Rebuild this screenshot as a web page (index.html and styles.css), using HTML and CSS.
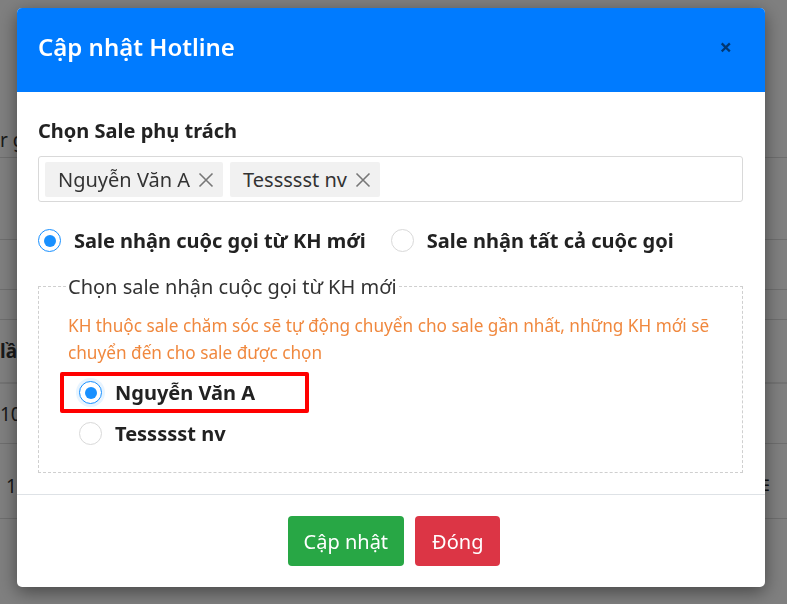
FILE: index.html
```html
<!DOCTYPE html>
<html lang="vi">
<head>
<meta charset="utf-8">
<title>Cập nhật Hotline</title>
<link rel="stylesheet" href="styles.css">
</head>
<body>
<div class="page">
  <div class="bg-row r1"><span class="bg-text">r g</span></div>
  <div class="bg-row r2"></div>
  <div class="bg-row r3"></div>
  <div class="bg-row r4"></div>
  <div class="bg-row r5 thick"><span class="bg-text bold">lần</span></div>
  <div class="bg-row r6"><span class="bg-text">10</span></div>
  <div class="bg-row r7"><span class="bg-text ind">1</span><span class="bg-menu">&#9776;</span></div>
</div>

<div class="overlay"></div>

<div class="modal">
  <div class="modal-header">
    <h2 class="modal-title">Cập nhật Hotline</h2>
    <span class="close">&times;</span>
  </div>
  <div class="modal-body">
    <div class="field-label">Chọn Sale phụ trách</div>
    <div class="select-box">
      <span class="tag">Nguyễn Văn A <svg class="tag-x" width="16" height="16" viewBox="0 0 16 16"><path d="M1.5 1.5L14.5 14.5M14.5 1.5L1.5 14.5" stroke="#777" stroke-width="1.6" fill="none"/></svg></span>
      <span class="tag">Tessssst nv <svg class="tag-x" width="16" height="16" viewBox="0 0 16 16"><path d="M1.5 1.5L14.5 14.5M14.5 1.5L1.5 14.5" stroke="#777" stroke-width="1.6" fill="none"/></svg></span>
    </div>
    <div class="radio-group">
      <label class="radio"><span class="dot on"></span><span class="radio-text">Sale nhận cuộc gọi từ KH mới</span></label>
      <label class="radio"><span class="dot"></span><span class="radio-text">Sale nhận tất cả cuộc gọi</span></label>
    </div>
    <fieldset class="sale-set">
      <legend>Chọn sale nhận cuộc gọi từ KH mới</legend>
      <p class="note">KH thuộc sale chăm sóc sẽ tự động chuyển cho sale gần nhất, những KH mới sẽ chuyển đến cho sale được chọn</p>
      <div class="option-list">
        <div class="option"><span class="dot on glow"></span><span class="radio-text">Nguyễn Văn A</span><span class="mark"></span></div>
        <div class="option"><span class="dot"></span><span class="radio-text">Tessssst nv</span></div>
      </div>
    </fieldset>
  </div>
  <div class="modal-footer">
    <button class="btn btn-green">Cập nhật</button>
    <button class="btn btn-red">Đóng</button>
  </div>
</div>
</body>
</html>
```

FILE: styles.css
```css
* { box-sizing: border-box; }
html, body { margin: 0; padding: 0; }
body {
  width: 787px;
  height: 604px;
  overflow: hidden;
  background: #ffffff;
  font-family: "Noto Sans", "Open Sans", "DejaVu Sans", sans-serif;
  color: #222;
}
.page {
  display: flex;
  flex-direction: column;
}
.bg-row {
  border-bottom: 1px solid #dcdcdc;
  display: flex;
  align-items: center;
  justify-content: space-between;
  color: #333;
  font-size: 19px;
}
.bg-row.thick { border-bottom: 2px solid #e6e6e6; }
.r1 { height: 158px; align-items: flex-start; padding-top: 128px; }
.r2 { height: 82px; }
.r3 { height: 50px; }
.r4 { height: 30px; }
.r5 { height: 64px; }
.r6 { height: 60px; }
.r7 { height: 75px; align-items: flex-start; padding-top: 30px; }
.bg-text { margin-left: 0; line-height: 24px; }
.bg-text.bold { font-weight: 700; }
.bg-text.ind { margin-left: 6px; }
.bg-menu { margin-right: 17px; font-size: 16px; color: #222; }

.overlay {
  position: fixed;
  inset: 0;
  background: rgba(0, 0, 0, 0.5);
}

.modal {
  position: fixed;
  left: 17px;
  top: 8px;
  width: 748px;
  background: #fff;
  border-radius: 5px;
  overflow: hidden;
  box-shadow: 0 5px 18px rgba(0, 0, 0, 0.45);
}
.modal-header {
  background: #007bff;
  height: 84px;
  padding: 22px 21px 0 21px;
  display: flex;
  align-items: flex-start;
  justify-content: space-between;
}
.modal-title {
  margin: 0;
  color: #fff;
  font-size: 24px;
  font-weight: 600;
  line-height: 34px;
}
.close {
  color: rgba(0, 0, 0, 0.55);
  font-size: 22px;
  font-weight: 700;
  line-height: 32px;
  margin-right: 12px;
}

.modal-body {
  padding: 25px 22px 21px 21px;
}
.field-label {
  font-size: 20px;
  font-weight: 700;
  line-height: 27px;
  color: #222;
}
.select-box {
  margin-top: 12px;
  height: 46px;
  border: 1px solid #d9d9d9;
  border-radius: 3px;
  padding: 5px 6px;
  display: flex;
  gap: 7px;
}
.tag {
  height: 35px;
  background: #f1f1f1;
  border-radius: 2px;
  padding: 0 9px 0 13px;
  display: flex;
  align-items: center;
  gap: 8px;
  font-size: 20px;
  color: #333;
}
.tag-x { display: block; }

.radio-group {
  margin-top: 25px;
  display: flex;
  gap: 25px;
}
.radio {
  display: flex;
  align-items: center;
  gap: 13px;
}
.radio-text {
  font-size: 20px;
  font-weight: 700;
  line-height: 27px;
  color: #222;
}
.dot {
  width: 23px;
  height: 23px;
  border-radius: 50%;
  border: 1px solid #d9d9d9;
  background: #fff;
  display: flex;
  align-items: center;
  justify-content: center;
  flex: none;
}
.dot.on { border-color: #1890ff; }
.dot.on::after {
  content: "";
  width: 12px;
  height: 12px;
  border-radius: 50%;
  background: #1890ff;
}
.dot.glow { box-shadow: 0 0 0 3px rgba(24, 144, 255, 0.1); }

.sale-set {
  margin: 19px 0 0 0;
  border: 1px dashed #cfcfcf;
  padding: 0 18px 18px 27px;
}
.sale-set legend {
  padding: 0 2px;
  font-size: 20px;
  line-height: 27px;
  color: #333;
}
.note {
  margin: 12px 0 0 0;
  padding-left: 2px;
  font-size: 17.2px;
  line-height: 27px;
  color: #f0883e;
}
.option-list {
  margin-top: 6px;
  display: flex;
  flex-direction: column;
}
.option {
  position: relative;
  height: 41px;
  display: flex;
  align-items: center;
  gap: 13px;
  padding-left: 13px;
}
.mark {
  position: absolute;
  left: -6px;
  top: 0;
  width: 249px;
  height: 41px;
  border: 4px solid #ff0000;
  border-radius: 2px;
}

.modal-footer {
  border-top: 1px solid #dee2e6;
  padding: 21px 21px 21px 27px;
  display: flex;
  justify-content: center;
  gap: 11px;
}
.btn {
  height: 50px;
  border: none;
  border-radius: 4px;
  padding: 0 16px;
  font-family: inherit;
  font-size: 20px;
  color: #fff;
}
.btn-green { background: #28a745; }
.btn-red { background: #dc3545; padding: 0 17px; }
```
